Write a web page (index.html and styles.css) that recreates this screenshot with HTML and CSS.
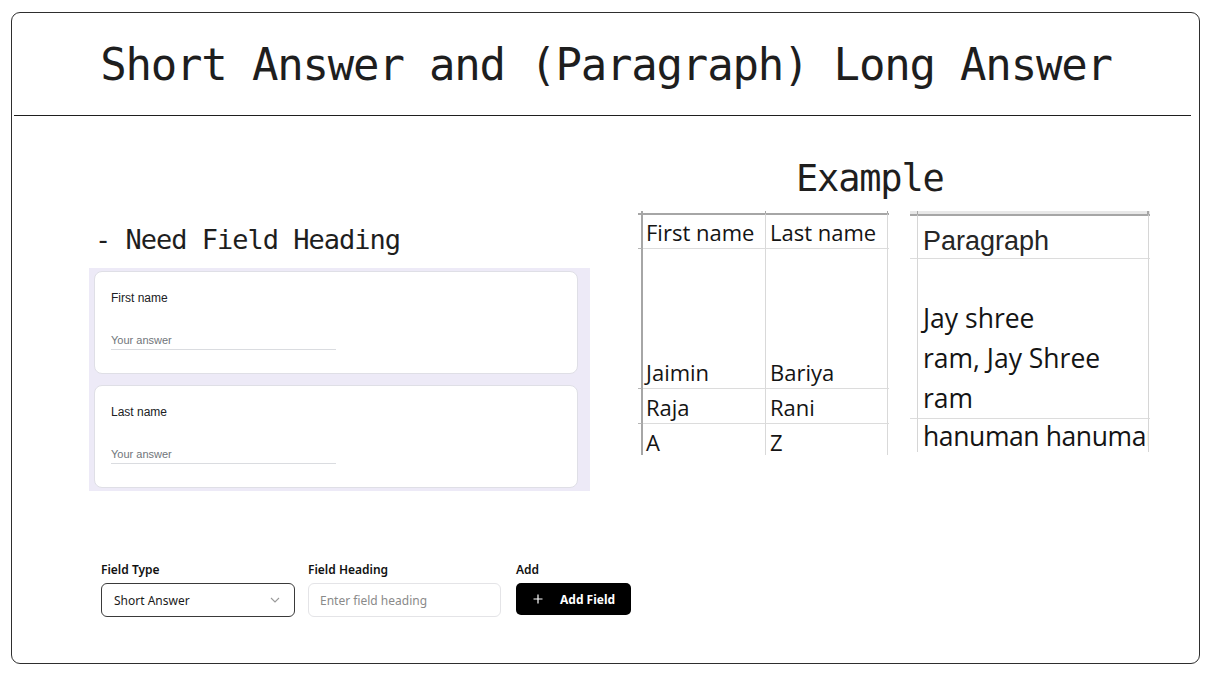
FILE: index.html
```html
<!DOCTYPE html>
<html lang="en">
<head>
<meta charset="utf-8">
<title>Short Answer and (Paragraph) Long Answer</title>
<link rel="stylesheet" href="styles.css">
</head>
<body>
<div class="frame">
  <header class="head">
    <h1 class="title">Short Answer and (Paragraph) Long Answer</h1>
  </header>
  <div class="rule"></div>

  <div class="main">
    <section class="left">
      <h2 class="need">- Need Field Heading</h2>
      <div class="form-panel">
        <div class="q-card">
          <div class="q-label">First name</div>
          <div class="q-answer">Your answer</div>
        </div>
        <div class="q-card">
          <div class="q-label">Last name</div>
          <div class="q-answer">Your answer</div>
        </div>
      </div>
    </section>

    <section class="right">
      <h2 class="example">Example</h2>
      <div class="sheets">
        <div class="sheet sheet-a">
          <div class="c tk stub"></div><div class="c tk col"></div><div class="c tk col"></div><div class="c tk tail"></div>

          <div class="c hd stub"></div>
          <div class="c hd col txt pl3">First name</div>
          <div class="c hd col txt pl4">Last name</div>
          <div class="c hd tail"></div>

          <div class="c rw stub"></div>
          <div class="c rw col txt pl3">Jaimin</div>
          <div class="c rw col txt pl4">Bariya</div>
          <div class="c rw tail"></div>

          <div class="c rw stub"></div>
          <div class="c rw col txt pl3">Raja</div>
          <div class="c rw col txt pl4">Rani</div>
          <div class="c rw tail"></div>

          <div class="c rw stub"></div>
          <div class="c rw col txt pl3">A</div>
          <div class="c rw col txt pl4">Z</div>
          <div class="c rw tail"></div>
        </div>

        <div class="sheet sheet-b">
          <div class="b band stub"></div><div class="b band col"></div><div class="b band tail"></div>

          <div class="b hd stub"></div>
          <div class="b hd col para">Paragraph</div>
          <div class="b hd tail"></div>

          <div class="b rw stub"></div>
          <div class="b rw col long">Jay shree<br>ram, Jay Shree<br>ram</div>
          <div class="b rw tail"></div>

          <div class="b rw stub"></div>
          <div class="b rw col long top">hanuman hanuman</div>
          <div class="b rw tail"></div>
        </div>
      </div>
    </section>
  </div>

  <div class="builder">
    <div class="fld">
      <div class="fld-label">Field Type</div>
      <div class="select">
        <span>Short Answer</span>
        <svg class="chev" width="10" height="6" viewBox="0 0 10 6"><polyline points="1,1 5,5 9,1" fill="none" stroke="#9a9a9a" stroke-width="1.1"/></svg>
      </div>
    </div>
    <div class="fld">
      <div class="fld-label">Field Heading</div>
      <div class="text-input">Enter field heading</div>
    </div>
    <div class="fld">
      <div class="fld-label">Add</div>
      <div class="add-btn">
        <svg class="plus" width="10" height="10" viewBox="0 0 10 10"><path d="M5 0.5V9.5M0.5 5H9.5" stroke="#fff" stroke-width="1.2" fill="none"/></svg>
        <span>Add Field</span>
      </div>
    </div>
  </div>
</div>
</body>
</html>
```

FILE: styles.css
```css
* { box-sizing: border-box; }

html, body {
  margin: 0;
  padding: 0;
  background: #ffffff;
}

body {
  font-family: "Liberation Sans", Arial, sans-serif;
  color: #1e1e1e;
}

.frame {
  margin: 12px 0 0 11px;
  width: 1189px;
  height: 652px;
  border: 1px solid #2e2e2e;
  border-radius: 9px;
  overflow: hidden;
}

.head {
  padding: 26px 0 24px;
}

.title {
  margin: 0;
  font-family: "DejaVu Sans Mono", "Liberation Mono", monospace;
  font-weight: normal;
  font-size: 44px;
  letter-spacing: -1.2px;
  line-height: 52px;
  text-align: center;
  padding-left: 1px;
  color: #1e1e1e;
}

.rule {
  margin: 0 8px 0 2px;
  border-top: 1px solid #1f1f1f;
}

.main {
  display: flex;
  align-items: flex-start;
  gap: 48px;
  padding-left: 77px;
}

.left {
  width: 501px;
  padding-top: 108px;
}

.need {
  margin: 0 0 12px 6px;
  font-family: "DejaVu Sans Mono", "Liberation Mono", monospace;
  font-weight: normal;
  font-size: 27px;
  letter-spacing: -1px;
  line-height: 32px;
  color: #1e1e1e;
}

.form-panel {
  background: #edeaf7;
  padding: 3px 12px 3px 5px;
  display: flex;
  flex-direction: column;
  gap: 11px;
}

.q-card {
  height: 103px;
  background: #ffffff;
  border: 1px solid #dfdfe6;
  border-radius: 8px;
  padding: 18px 16px 0;
}

.q-label {
  font-family: "Liberation Sans", Arial, sans-serif;
  font-size: 12px;
  line-height: 16px;
  color: #202124;
}

.q-answer {
  margin-top: 27px;
  width: 225px;
  font-family: "Liberation Sans", Arial, sans-serif;
  font-size: 11px;
  line-height: 14px;
  color: #70757a;
  padding-bottom: 2px;
  border-bottom: 1px solid #dadce0;
}

.right {
  width: 512px;
  padding-top: 41px;
}

.example {
  margin: 0 0 10px 158px;
  font-family: "DejaVu Sans Mono", "Liberation Mono", monospace;
  font-weight: normal;
  font-size: 37px;
  letter-spacing: -1.2px;
  line-height: 44px;
  color: #1e1e1e;
}

.sheets {
  display: flex;
  align-items: flex-start;
  gap: 21px;
}

.sheet {
  display: grid;
  overflow: hidden;
  background: #ffffff;
}

/* sheet A : First name / Last name */
.sheet-a {
  width: 251px;
  height: 244px;
  grid-template-columns: 5px 123px 122px 1px;
  grid-template-rows: 2px 36px 140px 35px 35px;
}

.c.stub { border-right: 2px solid #a6a6a6; }
.c.col { border-right: 1px solid #d9d9d9; }
.c.tk.col { border-right-color: #a6a6a6; }

.c.hd { border-top: 2px solid #a6a6a6; border-bottom: 1px solid #dcdcdc; }
.c.rw { border-bottom: 1px solid #dcdcdc; }
.c.hd.stub, .c.rw.stub { border-bottom-color: #b5b5b5; }

.txt {
  display: flex;
  align-items: flex-end;
  padding-bottom: 1px;
  font-family: "Open Sans", "Noto Sans", sans-serif;
  font-size: 22px;
  line-height: 30px;
  color: #141414;
  white-space: nowrap;
  overflow: hidden;
}

.pl3 { padding-left: 3px; }
.pl4 { padding-left: 4px; }

/* sheet B : Paragraph */
.sheet-b {
  width: 240px;
  height: 241px;
  grid-template-columns: 8px 231px 1px;
  grid-template-rows: 3px 45px 160px 40px;
}

.b.band { background: #e8e8e8; }
.b.band.stub { border-right: 1px solid #a6a6a6; }
.b.band.col { border-right: 2px solid #a6a6a6; }

.b.stub { border-right: 1px solid #d6d6d6; }
.b.col { border-right: 1px solid #d6d6d6; }

.b.hd { border-top: 2px solid #a6a6a6; border-bottom: 1px solid #dcdcdc; }
.b.rw { border-bottom: 1px solid #dcdcdc; }

.para {
  display: flex;
  align-items: flex-end;
  padding: 0 0 1px 5px;
  font-family: "Liberation Sans", Arial, sans-serif;
  font-size: 27px;
  line-height: 32px;
  color: #262626;
  white-space: nowrap;
}

.long {
  display: flex;
  align-items: flex-end;
  padding-left: 5px;
  font-family: "Open Sans", "Noto Sans", sans-serif;
  font-size: 26.5px;
  line-height: 40px;
  color: #141414;
  white-space: nowrap;
  overflow: hidden;
}

.long.top {
  align-items: flex-start;
  line-height: 34px;
  letter-spacing: -0.4px;
}

/* builder row */
.builder {
  margin-top: 71px;
  padding-left: 89px;
  display: grid;
  grid-template-columns: 207px 208px 115px;
  font-family: "Noto Sans", "Open Sans", sans-serif;
}

.fld-label {
  font-size: 12px;
  font-weight: 600;
  line-height: 16px;
  color: #111111;
  margin-bottom: 5px;
}

.select {
  width: 194px;
  height: 34px;
  border: 1px solid #3a3a3a;
  border-radius: 6px;
  padding: 0 14px 0 12px;
  display: flex;
  align-items: center;
  justify-content: space-between;
  font-size: 12px;
  color: #1a1a1a;
}

.text-input {
  width: 193px;
  height: 34px;
  border: 1px solid #e4e4e7;
  border-radius: 6px;
  padding: 0 11px;
  display: flex;
  align-items: center;
  font-size: 12px;
  color: #8a8a8a;
}

.add-btn {
  margin-top: 1px;
  width: 115px;
  height: 32px;
  background: #000000;
  border-radius: 5px;
  padding-left: 17px;
  display: flex;
  align-items: center;
  gap: 17px;
  color: #ffffff;
  font-size: 12px;
  font-weight: 700;
}

.plus { flex: none; }
.chev { flex: none; }
```
